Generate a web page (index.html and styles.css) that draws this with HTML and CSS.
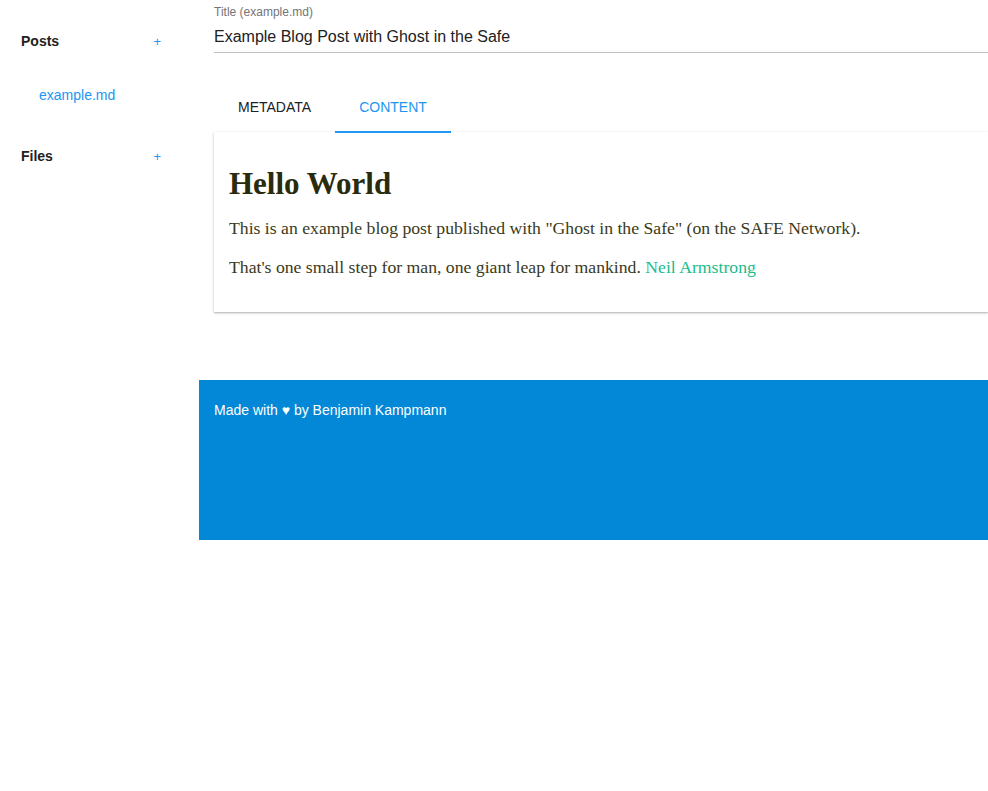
FILE: index.html
```html
<!DOCTYPE html>
<html>
<head>
<meta charset="utf-8">
<link rel="stylesheet" href="styles.css">
</head>
<body>
<div class="app">
  <aside class="sidebar">
    <div class="section-head"><span class="section-title">Posts</span><span class="add">+</span></div>
    <ul class="file-list"><li class="file">example.md</li></ul>
    <div class="section-head"><span class="section-title">Files</span><span class="add">+</span></div>
  </aside>
  <div class="main-col">
    <main class="main">
      <div class="field">
        <label class="field-label">Title (example.md)</label>
        <div class="field-input">Example Blog Post with Ghost in the Safe</div>
      </div>
      <div class="tabs">
        <div class="tab">METADATA</div>
        <div class="tab active">CONTENT</div>
      </div>
      <div class="card">
        <h1 class="post-title">Hello World</h1>
        <p class="post-p">This is an example blog post published with "Ghost in the Safe" (on the SAFE Network).</p>
        <p class="post-p">That's one small step for man, one giant leap for mankind. <a class="post-link">Neil Armstrong</a></p>
      </div>
    </main>
    <footer class="footer">Made with ♥ by Benjamin Kampmann</footer>
  </div>
</div>
</body>
</html>
```
FILE: styles.css
```css
html, body {
  margin: 0;
  padding: 0;
  background: #fff;
  font-family: "Liberation Sans", Arial, sans-serif;
  overflow: hidden;
}
.app {
  display: flex;
  width: 988px;
}
.sidebar {
  width: 199px;
  flex: none;
  padding-top: 32px;
  box-sizing: border-box;
}
.section-head {
  display: flex;
  justify-content: space-between;
  align-items: center;
  padding: 0 38px 0 21px;
  height: 18px;
}
.section-title {
  font-weight: bold;
  font-size: 14px;
  color: #212121;
}
.add {
  color: #2196f3;
  font-size: 13px;
}
.file-list {
  list-style: none;
  margin: 0;
  padding: 36px 0 43px 39px;
}
.file {
  color: #2196f3;
  font-size: 14px;
  line-height: 18px;
}
.main-col {
  flex: 1;
  min-width: 0;
}
.main {
  padding-left: 15px;
  height: 380px;
  box-sizing: border-box;
}
.field {
  padding-top: 5px;
}
.field-label {
  display: block;
  font-size: 12px;
  color: #757575;
  line-height: 14px;
}
.field-input {
  font-size: 16px;
  color: #212121;
  line-height: 20px;
  padding: 8px 0 5px;
  border-bottom: 1px solid #bdbdbd;
}
.tabs {
  display: flex;
  margin-top: 30px;
  position: relative;
  z-index: 1;
}
.tab {
  position: relative;
  padding: 0 24px;
  height: 48px;
  line-height: 48px;
  font-size: 14px;
  color: #212121;
}
.tab.active {
  color: #2196f3;
}
.tab.active::after {
  content: "";
  position: absolute;
  left: 0;
  right: 0;
  bottom: -2px;
  height: 2px;
  background: #2196f3;
}
.card {
  margin-top: 1px;
  padding: 15px 15px 34px;
  background: #fff;
  box-shadow: 0 1px 3px rgba(0,0,0,0.2), 0 1px 1px rgba(0,0,0,0.12);
  font-family: "Liberation Serif", "Times New Roman", serif;
  color: #3a3a20;
}
.post-title {
  margin: 19px 0 15px;
  font-size: 31px;
  line-height: 36px;
  color: #2a2a0c;
  font-weight: bold;
}
.post-p {
  font-size: 17.7px;
  line-height: 22px;
  margin: 0 0 17px;
}
.post-p:last-child {
  margin-bottom: 0;
}
.post-link {
  color: #1abc8c;
}
.footer {
  background: #0288d6;
  color: #fff;
  height: 160px;
  box-sizing: border-box;
  padding: 22px 15px;
  font-size: 14px;
}
```
